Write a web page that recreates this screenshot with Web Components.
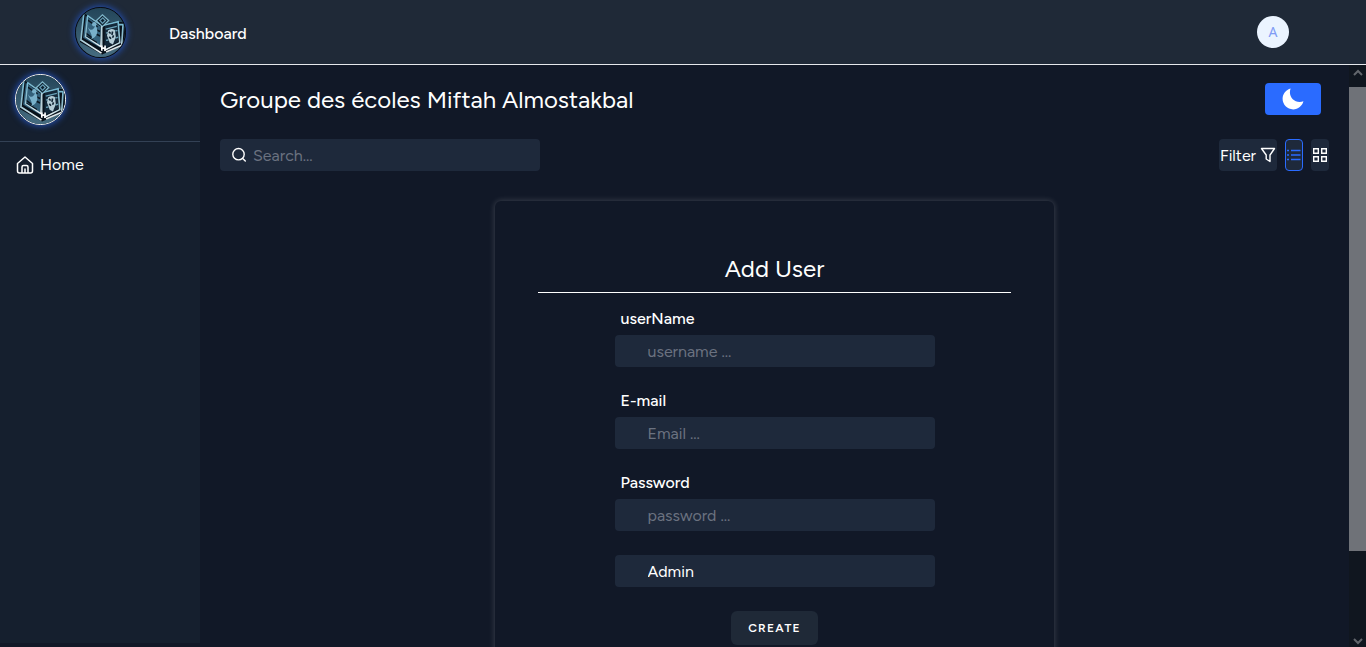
<!DOCTYPE html>
<html lang="en">
<head>
<meta charset="utf-8">
<meta name="viewport" content="width=device-width, initial-scale=1">
<title>Add User</title>
<style>
  html, body { margin: 0; height: 100%; }
  body {
    background: #111827; color: #fff; overflow: hidden;
    font: 16px/24px Figtree, Lato, sans-serif;
    --panel: #1e293b; --bar: #1f2937; --side: #151f2e; --blue: #2a6bff;
  }
</style>
</head>
<body>
<app-shell>
  <top-bar slot="header"></top-bar>
  <side-bar slot="side"></side-bar>
  <page-toolbar></page-toolbar>
  <user-form></user-form>
</app-shell>

<script>
const define = (name, html, setup) => {
  const template = document.createElement('template');
  template.innerHTML = `<style>*{box-sizing:border-box}input,button,select{font:inherit;color:inherit;margin:0;border:0}:focus-visible{outline:2px solid #2a6bff}svg{display:block}</style>` + html;
  customElements.define(name, class extends HTMLElement {
    constructor() {
      super();
      this.attachShadow({ mode: 'open' }).append(template.content.cloneNode(true));
    }
    connectedCallback() { if (setup) setup(this, this.shadowRoot); }
  });
};

define('school-logo', `
  <style>
    :host { display: block; box-sizing: border-box; width: 51px; height: 51px; border-radius: 50%; border: 1px solid var(--ring, #050a12); box-shadow: 0 0 6px 1px #2350b4; overflow: hidden; flex: none; }
    svg { width: 100%; height: 100%; }
  </style>
  <svg viewBox="0 0 150 150" role="img" aria-label="School logo">
    <defs>
      <linearGradient id="bg" x1="0" y1="0" x2="0" y2="1"><stop offset="0" stop-color="#234559"/><stop offset="1" stop-color="#466c80"/></linearGradient>
      <linearGradient id="edge" x1="0" y1="0" x2="0" y2="1"><stop offset="0" stop-color="#74b8d2"/><stop offset=".6" stop-color="#93bfce"/><stop offset="1" stop-color="#f4f7f8"/></linearGradient>
    </defs>
    <rect width="150" height="150" fill="url(#bg)"/>
    <path d="M24 16 12 104 80 142 150 112V44L118 42 80 48Z" fill="#08111a"/>
    <path d="M30 24 22 91 75 122V57Z" fill="#33607a"/>
    <path d="M36 37 66 58M60 66 74 72M58 78 74 86M29 76 53 94M31 86 64 106" stroke="#0a1722" stroke-width="5"/>
    <path d="M36 24 74 50M24 16 15 98 78 138" fill="none" stroke="url(#edge)" stroke-width="5"/>
    <path d="M36 22 29 88 76 118 78 54" fill="none" stroke="url(#edge)" stroke-width="4"/>
    <path d="M36 58C46 74 54 66 60 53 70 70 66 88 47 96 52 84 44 77 36 58Z" fill="#78b0ca"/>
    <circle cx="56" cy="50" r="7" fill="#78b0ca"/>
    <path d="M88 54 127 45 129 103 87 124Z" fill="#14293a"/>
    <path d="M84 53 129 42 134 106 86 130M129 51H144L140 112" fill="none" stroke="url(#edge)" stroke-width="5"/>
    <path d="M91 65 125 56M92 77 98 75M120 70 127 69M92 99 99 98M121 92 129 89" stroke="#6aa3b9" stroke-width="4"/>
    <path d="M98 69Q107 60 119 67L122 89 113 112 103 106 95 84Z" fill="#b4ccd6"/>
    <path d="M101 73 106 78M112 72 110 82M115 84 112 91M102 88 107 94" stroke="#102433" stroke-width="5"/>
    <path d="M62 39 81 21 100 38 81 57Z" fill="#0d202e" stroke="#7fb6ca" stroke-width="4"/>
    <path d="M73 38 82 30 90 38 81 47Z" fill="none" stroke="#659bb3" stroke-width="4"/>
    <path d="M79 56V120" stroke="#c4dae1" stroke-width="4"/>
    <path d="M79 115V131M89 115V131M79 123H89" stroke="#fff" stroke-width="5"/>
    <path d="M92 135 142 113" stroke="#e0e8ea" stroke-width="5"/>
  </svg>`);

define('top-bar', `
  <style>
    :host { display: block; background: var(--bar); border-bottom: 1px solid #e5e7eb; }
    header { display: flex; align-items: center; height: 64px; padding: 0 77px 0 75px; }
    nav { flex: 1; padding: 3px 0 0 43px; }
    a { color: #fff; text-decoration: none; font-weight: 500; }
    button { width: 32px; height: 32px; padding: 0; border-radius: 50%; background: #ebf4ff; color: #7f9cf5; font: 14px/32px "Noto Sans", sans-serif; }
  </style>
  <header>
    <school-logo></school-logo>
    <nav><a href="#dashboard">Dashboard</a></nav>
    <button type="button" aria-label="Account">A</button>
  </header>`);

define('side-bar', `
  <style>
    :host { display: block; background: var(--side); }
    .brand { padding: 9px 15px 16px; border-bottom: 1px solid #334155; --ring: #fff; }
    a { display: flex; align-items: center; gap: 6px; padding: 11px 16px; color: #fff; text-decoration: none; }
  </style>
  <div class="brand"><school-logo></school-logo></div>
  <nav><a href="#home">
    <svg width="18" height="20" viewBox="0 0 18 20" fill="none" stroke="#fff" stroke-width="1.5" stroke-linejoin="round" stroke-linecap="round" aria-hidden="true"><path d="M1.500 8.500 9 2l7.500 6.500V16q0 2-2 2h-11q-2 0-2-2ZM6 18v-6q0-1.500 1.500-1.500h3Q12 10.500 12 12v6M9 14v4"/></svg>
    Home</a></nav>`);

define('page-toolbar', `
  <style>
    :host { display: block; }
    .row { display: flex; align-items: center; height: 32px; }
    .head { margin-bottom: 24px; padding-right: 8px; justify-content: space-between; }
    h1 { margin: 0; padding-top: 2px; font-size: 24px; line-height: 32px; font-weight: 400; }
    button { display: flex; align-items: center; justify-content: center; padding: 0; height: 32px; border-radius: 4px; background: var(--panel); }
    .theme { width: 56px; background: var(--blue); }
    .search { display: flex; align-items: center; gap: 5px; width: 320px; height: 32px; padding: 0 10px; border-radius: 4px; background: var(--panel); }
    input { flex: 1; min-width: 0; padding: 2px 0 0; background: none; line-height: 24px; }
    input::placeholder { color: #6b7280; opacity: 1; }
    .tools { display: flex; gap: 8px; margin-left: auto; }
    .filter { width: 58px; gap: 4px; }
    .filter span { padding-top: 2px; }
    .view { width: 18px; }
    .on { border: 1px solid var(--blue); color: var(--blue); }
  </style>
  <div class="row head">
    <h1>Groupe des écoles Miftah Almostakbal</h1>
    <button class="theme" type="button" aria-label="Dark mode"><svg width="26" height="26" viewBox="0 0 512 512" fill="#fff"><path d="M195 125c0-26.300 5.300-51.300 14.900-74.100C118.700 73 51 155.100 51 253c0 114.800 93.200 208 208 208 97.900 0 180-67.700 202.100-158.900-22.800 9.600-47.900 14.900-74.100 14.900-106 0-192-86-192-192z"/></svg></button>
  </div>
  <div class="row">
    <label class="search">
      <svg width="18" height="18" viewBox="0 0 18 18" fill="none" stroke="#fff" stroke-width="1.400" stroke-linecap="round" aria-hidden="true"><circle cx="8.500" cy="8.200" r="5.700"/><path d="m12.700 12.400 2.600 2.600"/></svg>
      <input type="search" placeholder="Search..." aria-label="Search">
    </label>
    <div class="tools">
      <button class="filter" type="button"><span>Filter</span> <svg width="16" height="16" viewBox="0 0 16 16" fill="none" stroke="#fff" stroke-width="1.400" stroke-linejoin="round"><path d="M1.500 1.500h13L10 8v6.500L6.200 12V8Z"/></svg></button>
      <button class="view on" type="button" aria-label="List view"><svg width="16" height="12" viewBox="0 0 16 12" stroke="currentColor" stroke-width="1.500"><path d="M1 1.500h2M1 6h2M1 10.500h2M5 1.500h9.500M5 6h9.500M5 10.500h9.500"/></svg></button>
      <button class="view" type="button" aria-label="Grid view"><svg width="16" height="16" viewBox="0 0 16 16" fill="none" stroke="#fff" stroke-width="1.400"><path d="M1.700 1.700h4.600v4.600H1.700ZM9.700 1.700h4.600v4.600H9.700ZM1.700 9.700h4.600v4.600H1.700ZM9.700 9.700h4.600v4.600H9.700Z"/></svg></button>
    </div>
  </div>`);

define('text-field', `
  <style>
    :host { display: block; }
    label { display: block; padding-left: 6px; margin-bottom: 6px; line-height: 20px; font-weight: 500; }
    input { display: block; width: 100%; height: 32px; padding: 0 33px; border-radius: 4px; background: var(--panel); }
    input::placeholder { color: #6b7280; opacity: 1; }
  </style>
  <label for="field"></label>
  <input id="field">`, (host, root) => {
  root.querySelector('label').textContent = host.getAttribute('label');
  const input = root.querySelector('input');
  input.placeholder = host.getAttribute('placeholder');
  input.type = host.getAttribute('type') || 'text';
});

define('user-form', `
  <style>
    :host { display: block; max-width: 559px; margin: 30px auto 0; padding: 51px 43px 48px; border-radius: 6px; box-shadow: 0 0 6px rgba(255, 255, 255, .2); box-sizing: border-box; }
    h2 { margin: 0 0 16px; padding: 1px 0 7px; border-bottom: 1px solid #fff; text-align: center; font-size: 24px; line-height: 32px; font-weight: 400; }
    form { display: flex; flex-direction: column; gap: 24px; max-width: 320px; margin: 0 auto; }
    select { appearance: none; height: 32px; padding: 2px 33px 0; border-radius: 4px; background: var(--panel); }
    button { align-self: center; padding: 9px 17px; border-radius: 6px; background: var(--bar); font-size: 12px; line-height: 16px; font-weight: 600; letter-spacing: .1em; }
  </style>
  <h2>Add User</h2>
  <form>
    <text-field label="userName" placeholder="username ..."></text-field>
    <text-field label="E-mail" placeholder="Email ..." type="email"></text-field>
    <text-field label="Password" placeholder="password ..." type="password"></text-field>
    <select aria-label="Role"><option>Admin</option></select>
    <button type="button">CREATE</button>
  </form>`);

define('scroll-rail', `
  <style>
    :host { display: flex; flex-direction: column; background: #10161f; }
    svg { width: 17px; height: 12px; margin: 2px 0 8px; }
    .track { flex: 1; display: flex; flex-direction: column; }
    .thumb { flex: 11; background: #6f7278; }
    .rest { flex: 2; }
    .down { margin: 0; transform: scaleY(-1); }
  </style>
  <svg viewBox="0 0 17 12" fill="none" stroke="#62666c" stroke-width="2" aria-hidden="true"><path d="m5 8 4-4 4 4"/></svg>
  <div class="track"><div class="thumb"></div><div class="rest"></div></div>
  <svg class="down" viewBox="0 0 17 12" fill="none" stroke="#62666c" stroke-width="2" aria-hidden="true"><path d="m5 8 4-4 4 4"/></svg>`);

define('app-shell', `
  <style>
    :host { display: flex; flex-direction: column; height: 100vh; }
    .body { flex: 1; min-height: 0; display: grid; grid-template-columns: 200px 1fr 17px; grid-template-rows: 100%; }
    .side { display: grid; padding-bottom: 4px; }
    main { overflow: hidden; padding: 18px 20px 0; }
  </style>
  <slot name="header"></slot>
  <div class="body">
    <div class="side"><slot name="side"></slot></div>
    <main><slot></slot></main>
    <scroll-rail></scroll-rail>
  </div>`);
</script>
</body>
</html>
